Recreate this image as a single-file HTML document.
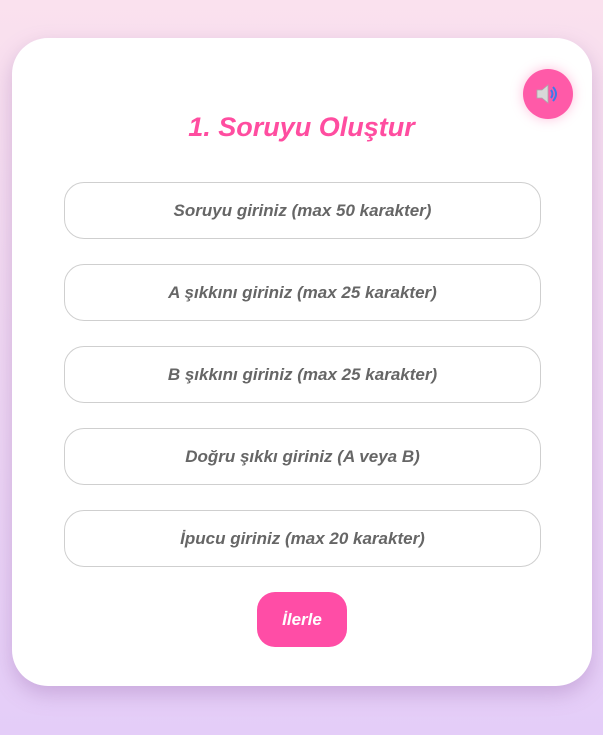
<!DOCTYPE html>
<html><head><meta charset="utf-8"><style>
html,body{margin:0;padding:0;width:603px;height:735px;overflow:hidden;background:linear-gradient(#fae1ee,#e4cdf8);font-family:"Liberation Sans",sans-serif;}
.card{position:absolute;left:12px;top:38px;width:580px;height:648px;background:#fff;border-radius:36px;box-shadow:0 8px 20px rgba(150,100,170,0.35);}
h1{position:absolute;left:0;right:0;top:112px;margin:0;text-align:center;color:#ff4da0;font-size:27px;font-style:italic;font-weight:bold;}
.in{position:absolute;left:64px;width:477px;height:57px;border:1px solid #cfcfcf;border-radius:20px;box-sizing:border-box;text-align:center;line-height:55px;color:#666;font-size:17px;font-style:italic;font-weight:bold;}
.btn{position:absolute;left:257px;top:592px;width:90px;height:55px;border-radius:18px;background:#ff4da6;color:#fff;text-align:center;line-height:55px;font-size:17px;font-style:italic;font-weight:bold;}
.snd{position:absolute;left:523px;top:69px;width:50px;height:50px;border-radius:50%;background:#ff5aa8;box-shadow:0 0 12px rgba(255,100,170,0.4);}
</style></head><body>
<div class="card"></div>
<div class="snd"><svg width="50" height="50" viewBox="0 0 50 50"><path d="M14 21h5l6-5v18l-6-5h-5z" fill="#d8d8d8" stroke="#aaa" stroke-width="0.8"/><path d="M28 21q3 4 0 8M30 18q6 7 0 14" fill="none" stroke="#3a7bea" stroke-width="2"/></svg></div>
<h1>1. Soruyu Oluştur</h1>
<div class="in" style="top:182px">Soruyu giriniz (max 50 karakter)</div>
<div class="in" style="top:264px">A şıkkını giriniz (max 25 karakter)</div>
<div class="in" style="top:346px">B şıkkını giriniz (max 25 karakter)</div>
<div class="in" style="top:428px">Doğru şıkkı giriniz (A veya B)</div>
<div class="in" style="top:510px">İpucu giriniz (max 20 karakter)</div>
<div class="btn">İlerle</div>
</body></html>
